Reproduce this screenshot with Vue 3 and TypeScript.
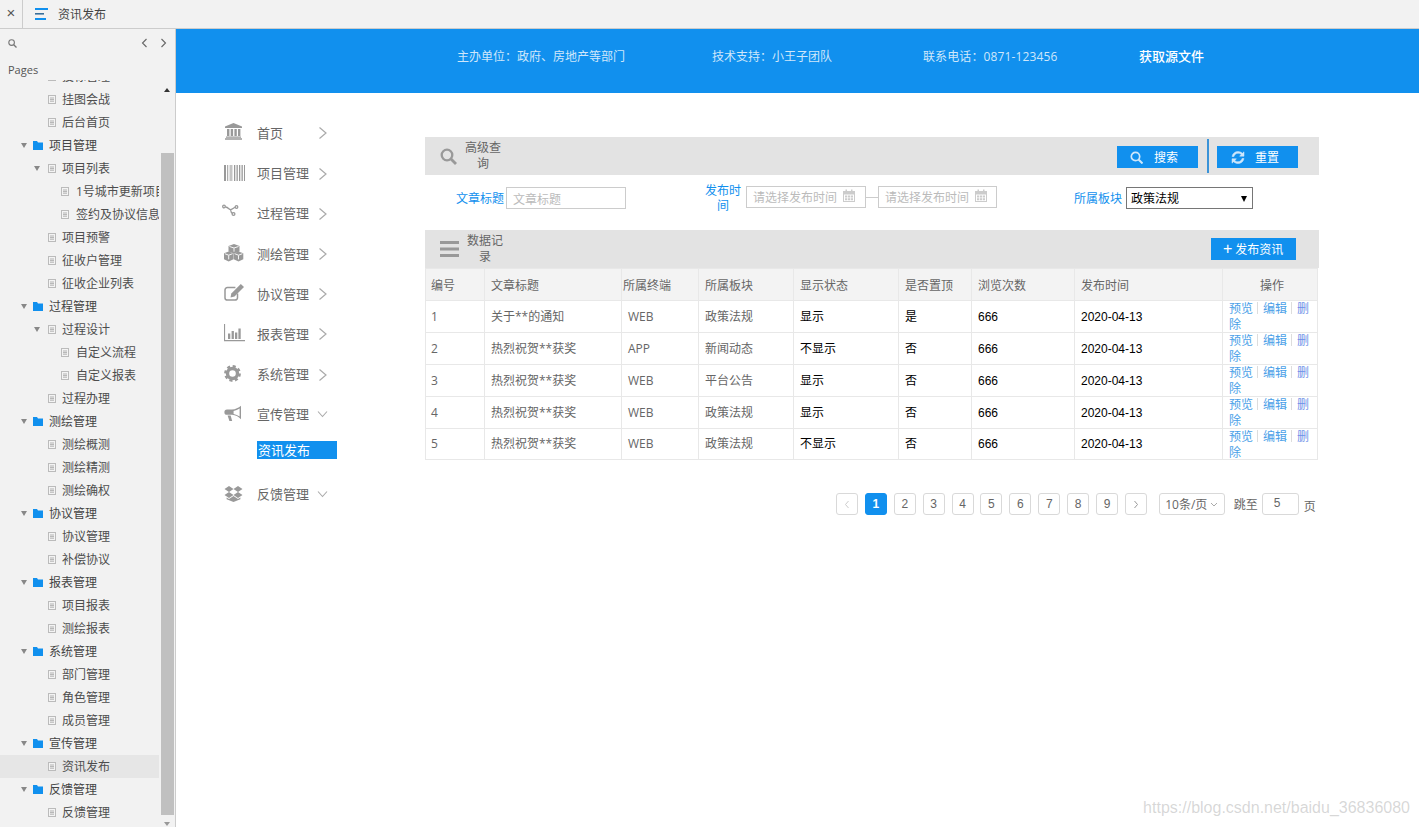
<script setup lang="ts">
type TreeRow = { level: 1 | 2 | 3; text: string; arrow?: boolean; selected?: boolean };
const tree: TreeRow[] = [
  { level: 2, text: '投标管理' }, { level: 2, text: '挂图会战' }, { level: 2, text: '后台首页' },
  { level: 1, text: '项目管理', arrow: true }, { level: 2, text: '项目列表', arrow: true },
  { level: 3, text: '1号城市更新项目' }, { level: 3, text: '签约及协议信息' },
  { level: 2, text: '项目预警' }, { level: 2, text: '征收户管理' }, { level: 2, text: '征收企业列表' },
  { level: 1, text: '过程管理', arrow: true }, { level: 2, text: '过程设计', arrow: true },
  { level: 3, text: '自定义流程' }, { level: 3, text: '自定义报表' }, { level: 2, text: '过程办理' },
  { level: 1, text: '测绘管理', arrow: true }, { level: 2, text: '测绘概测' }, { level: 2, text: '测绘精测' }, { level: 2, text: '测绘确权' },
  { level: 1, text: '协议管理', arrow: true }, { level: 2, text: '协议管理' }, { level: 2, text: '补偿协议' },
  { level: 1, text: '报表管理', arrow: true }, { level: 2, text: '项目报表' }, { level: 2, text: '测绘报表' },
  { level: 1, text: '系统管理', arrow: true }, { level: 2, text: '部门管理' }, { level: 2, text: '角色管理' }, { level: 2, text: '成员管理' },
  { level: 1, text: '宣传管理', arrow: true }, { level: 2, text: '资讯发布', selected: true },
  { level: 1, text: '反馈管理', arrow: true }, { level: 2, text: '反馈管理' },
];
const menus = [
  { icon: 'bank', text: '首页' }, { icon: 'barcode', text: '项目管理' }, { icon: 'flow', text: '过程管理' },
  { icon: 'cubes', text: '测绘管理' }, { icon: 'edit', text: '协议管理' }, { icon: 'chart', text: '报表管理' },
  { icon: 'gear', text: '系统管理' }, { icon: 'horn', text: '宣传管理', open: true, sub: '资讯发布' },
  { icon: 'box', text: '反馈管理', open: true },
];
const heads = ['编号', '文章标题', '所属终端', '所属板块', '显示状态', '是否置顶', '浏览次数', '发布时间', '操作'];
const colWidths = [59, 137, 77, 95, 105, 73, 103, 148, 95];
const rows = [
  ['1', '关于**的通知', 'WEB', '政策法规', '显示', '是'],
  ['2', '热烈祝贺**获奖', 'APP', '新闻动态', '不显示', '否'],
  ['3', '热烈祝贺**获奖', 'WEB', '平台公告', '显示', '否'],
  ['4', '热烈祝贺**获奖', 'WEB', '政策法规', '显示', '否'],
  ['5', '热烈祝贺**获奖', 'WEB', '政策法规', '不显示', '否'],
];
const pages = [1, 2, 3, 4, 5, 6, 7, 8, 9];
</script>

<template>
  <div class="page">
    <header class="topbar">
      <span class="close">×</span>
      <svg class="nav-ic" width="14" height="14" viewBox="0 0 14 14">
        <rect x="0" y="1" width="13" height="2" fill="#1190ee" />
        <rect x="0" y="6" width="9" height="1.6" fill="#3a6f9a" />
        <rect x="0" y="11" width="11" height="2" fill="#1190ee" />
      </svg>
      <span class="top-title">资讯发布</span>
    </header>
    <div class="body">
      <aside class="side">
        <div class="side-search">
          <svg width="9" height="9" viewBox="0 0 9 9"><circle cx="3.6" cy="3.6" r="2.8" fill="none" stroke="#777" stroke-width="1.1" /><path d="M5.7 5.7L8.5 8.5" stroke="#777" stroke-width="1.3" /></svg>
          <svg class="pager-l" width="7" height="10" viewBox="0 0 7 10"><path d="M5.5 1L1.5 5l4 4" fill="none" stroke="#666" stroke-width="1.1" /></svg>
          <svg class="pager-r" width="7" height="10" viewBox="0 0 7 10"><path d="M1.5 1l4 4-4 4" fill="none" stroke="#666" stroke-width="1.1" /></svg>
        </div>
        <div class="pages-title">Pages</div>
        <div class="tree">
          <div class="tree-inner">
            <div v-for="(r, i) in tree" :key="i" class="tree-row" :class="['lv' + r.level, { selected: r.selected }]">
              <span v-if="r.arrow" class="tri"></span>
              <svg v-if="r.level === 1" class="folder" width="10" height="9" viewBox="0 0 10 9"><path d="M0 0h4l1 1.5h5V9H0z" fill="#1190ee" /></svg>
              <svg v-else class="doc" width="8" height="9" viewBox="0 0 8 9"><rect x="0.5" y="0.5" width="7" height="8" fill="#f4f4f4" stroke="#bbb" /><path d="M2 3h4M2 4.6h4M2 6.2h4" stroke="#aaa" stroke-width="0.9" /></svg>
              <span class="tree-text">{{ r.text }}</span>
            </div>
          </div>
        </div>
        <div class="sb-thumb"></div>
        <span class="sb-up"></span>
        <span class="sb-down"></span>
      </aside>
      <main class="main">
        <div class="banner">
          <span class="b1">主办单位：政府、房地产等部门</span>
          <span class="b2">技术支持：小王子团队</span>
          <span class="b3">联系电话：0871-123456</span>
          <span class="b4">获取源文件</span>
        </div>
        <div class="work">
          <nav class="menu">
            <template v-for="m in menus" :key="m.text">
              <div class="menu-row">
                <svg class="m-ic" width="20" height="18" viewBox="0 0 20 18" fill="#999">
                  <template v-if="m.icon === 'bank'">
                    <path d="M9.5 0L18 3.6V5H1V3.6z" /><path d="M3 6h2.4v7H3zM6.7 6h2.4v7H6.7zM10.4 6h2.4v7h-2.4zM14 6h2.4v7H14z" /><path d="M2 13.6h15v1.2H2zM1 15.2h17v1.6H1z" />
                  </template>
                  <template v-else-if="m.icon === 'barcode'">
                    <path d="M0 1h2v16H0zM3.200 1h1v16h-1z" />
                    <path d="M5.500 1h3v16h-3z" fill="#c4c4c4" />
                    <path d="M10 1h1.300v16H10zM12.500 1h1.300v16h-1.300zM15 1h1.300v16H15zM17.500 1h1.300v16h-1.300zM20 1h1v16h-1z" />
                  </template>
                  <template v-else-if="m.icon === 'flow'">
                    <g fill="none" stroke="#999" stroke-width="1.3">
                      <circle cx="0" cy="2.500" r="1.300" /><circle cx="12.500" cy="3" r="1.300" /><circle cx="9.500" cy="10" r="1.400" />
                      <path d="M1.500 3c3 .3 3.500 2.700 5 2.700 1.700 0 3-1.500 4.500-2.500M6.500 5.700c.3 2 1 3.300 2 3.700" />
                    </g>
                  </template>
                  <template v-else-if="m.icon === 'cubes'">
                    <path d="M10 0l5.500 2v5.500L10 9.500 4.500 7.500V2z" /><path d="M4.700 7.500l4.800 1.800v6L4.700 17.500 0 15.300v-6z" /><path d="M14.500 7.500l4.800 1.800v6l-4.800 2.200-4.800-2.200v-6z" />
                    <path d="M5.500 2.500L10 4l4.500-1.500M.8 9.700l3.900 1.500 3.900-1.500M10.600 9.700l3.900 1.500 3.900-1.500M10 4.200v3.500M4.700 11.400v4M14.500 11.400v4" fill="none" stroke="#fff" stroke-width=".9" />
                  </template>
                  <template v-else-if="m.icon === 'edit'">
                    <path d="M13.500 9.500v4.200a2.400 2.400 0 0 1-2.400 2.400H3.400A2.400 2.400 0 0 1 1 13.700V6a2.400 2.400 0 0 1 2.400-2.400h8" fill="none" stroke="#999" stroke-width="1.500" />
                    <path d="M16.800 0l3.200 3L10.500 12.500l-4 .9.800-4z" />
                  </template>
                  <template v-else-if="m.icon === 'chart'">
                    <path d="M0 0h1.100v16H21v1.200H0z" /><path d="M4 9.500h2.300v5.500H4zM7.600 7h2.300v8H7.600zM11 8.500h2.300V15H11zM14.400 4.500h2.300V15h-2.300z" />
                  </template>
                  <template v-else-if="m.icon === 'gear'">
                    <circle cx="8.500" cy="8.500" r="5" fill="none" stroke="#999" stroke-width="3.400" />
                    <circle cx="8.500" cy="8.500" r="7.200" fill="none" stroke="#999" stroke-width="2.400" stroke-dasharray="3.050 2.600" />
                  </template>
                  <template v-else-if="m.icon === 'horn'">
                    <path d="M17 .8v13.400c-2.400-2.600-5.600-4.200-9-4.400H3A2.600 2.600 0 0 1 .4 7.200 2.600 2.600 0 0 1 3 4.600h5C11.400 4.300 14.600 3 17 .8zM15.600 3.600c-1.800 1.200-3.800 2-6 2.400v3c2.200.4 4.200 1.300 6 2.500z" />
                    <path d="M3.600 10.500h3l1.600 5.500H5.400z" />
                  </template>
                  <template v-else>
                    <path d="M5 1l4.500 3-4.500 3L.5 4zM14 1l4.500 3L14 7 9.500 4zM5 7l4.500 3L5 13 .5 10zM14 7l4.500 3L14 13l-4.500-3z" />
                    <path d="M9.500 11l4.500 3 2.400-1.500v1.800l-6.900 2.700-6.900-2.700v-1.800L5 14z" />
                  </template>
                </svg>
                <span class="m-label">{{ m.text }}</span>
                <svg v-if="!m.open" class="m-chev" width="10" height="14" viewBox="0 0 10 14"><path d="M1.500 1.500L8 7l-6.500 5.500" fill="none" stroke="#aaa" stroke-width="1.200" /></svg>
                <svg v-else class="m-chev open" width="11" height="10" viewBox="0 0 11 10"><path d="M1 2.500L5.500 7.500 10 2.500" fill="none" stroke="#aaa" stroke-width="1.100" /></svg>
              </div>
              <div v-if="m.sub" class="m-sub"><span class="m-sub-text">{{ m.sub }}</span></div>
            </template>
          </nav>
          <section class="content">
            <div class="bar">
              <svg class="bar-ic" width="17" height="17" viewBox="0 0 17 17"><circle cx="7" cy="7" r="5.300" fill="none" stroke="#999" stroke-width="2.300" /><path d="M11 11l5 5" stroke="#999" stroke-width="2.800" /></svg>
              <span class="bar-title t1">高级查询</span>
              <button class="btn b-search">
                <svg width="13" height="13" viewBox="0 0 13 13"><circle cx="5.500" cy="5.500" r="4.200" fill="none" stroke="#cfe7fb" stroke-width="1.700" /><path d="M8.500 8.500l4 4" stroke="#cfe7fb" stroke-width="2" /></svg>
                <span>搜索</span>
              </button>
              <span class="bar-sep"></span>
              <button class="btn b-reset">
                <svg width="14" height="13" viewBox="0 0 14 13" fill="#cfe7fb" stroke="#cfe7fb" stroke-width=".5"><path d="M1 5.500C1.500 2.500 4 .5 7 .5c1.800 0 3.300.7 4.400 1.800L13 .8v4.400H8.600l1.600-1.600C9.500 2.800 8.300 2.300 7 2.300 5 2.300 3.400 3.600 3 5.500zM13 7.500c-.5 3-3 5-6 5-1.800 0-3.300-.7-4.400-1.800L1 12.200V7.800h4.400L3.800 9.400c.7.800 1.900 1.300 3.200 1.300 2 0 3.600-1.300 4-3.200z" /></svg>
                <span>重置</span>
              </button>
            </div>
            <div class="filters">
              <label class="f-label l1">文章标题</label>
              <div class="text-box"><span class="ph">文章标题</span></div>
              <label class="f-label l2">发布时间</label>
              <div class="date-box">
                <span class="ph">请选择发布时间</span>
                <svg width="14" height="14" viewBox="0 0 14 14" fill="#ccc"><path d="M1 2h2.500V.5h1.500V2h4V.5h1.500V2H13v11H1zM2 5.500V12h10V5.500z" /><path d="M3 6.500h2.200v2H3zM5.900 6.500h2.200v2H5.900zM8.800 6.500h2.200v2H8.800zM3 9.300h2.200v2H3zM5.900 9.300h2.200v2H5.900zM8.800 9.300h2.200v2H8.800z" /></svg>
              </div>
              <span class="dash"></span>
              <div class="date-box">
                <span class="ph">请选择发布时间</span>
                <svg width="14" height="14" viewBox="0 0 14 14" fill="#ccc"><path d="M1 2h2.500V.5h1.500V2h4V.5h1.500V2H13v11H1zM2 5.500V12h10V5.500z" /><path d="M3 6.500h2.200v2H3zM5.900 6.500h2.200v2H5.900zM8.800 6.500h2.200v2H8.800zM3 9.300h2.200v2H3zM5.900 9.300h2.200v2H5.900zM8.800 9.300h2.200v2H8.800z" /></svg>
              </div>
              <label class="f-label l3">所属板块</label>
              <div class="sel-wrap">
                <select class="sel"><option>政策法规</option></select>
                <span class="sel-arrow"></span>
              </div>
            </div>
            <div class="bar">
              <svg class="bar-ic2" width="19" height="16" viewBox="0 0 19 16" fill="#999"><rect width="19" height="3" /><rect y="6.500" width="19" height="3" /><rect y="13" width="19" height="3" /></svg>
              <span class="bar-title t2">数据记录</span>
              <button class="btn b-add"><span class="plus">+</span><span>发布资讯</span></button>
            </div>
            <table class="grid">
              <colgroup><col v-for="(w, i) in colWidths" :key="i" :style="{ width: w + 'px' }" /></colgroup>
              <thead>
                <tr><th v-for="(h, i) in heads" :key="h" :class="{ tight: i === 2, center: i === 8 }">{{ h }}</th></tr>
              </thead>
              <tbody>
                <tr v-for="r in rows" :key="r[0]">
                  <td class="grey">{{ r[0] }}</td>
                  <td class="grey">{{ r[1] }}</td>
                  <td class="grey">{{ r[2] }}</td>
                  <td class="grey">{{ r[3] }}</td>
                  <td>{{ r[4] }}</td>
                  <td>{{ r[5] }}</td>
                  <td class="num">666</td>
                  <td class="num">2020-04-13</td>
                  <td class="ops"><div class="ops-in"><a class="op">预览</a><i class="sep"></i><a class="op">编辑</a><i class="sep"></i><a class="op del">删</a><a class="op del2">除</a></div></td>
                </tr>
              </tbody>
            </table>
            <div class="pager">
              <span class="pg arrow"><svg width="6" height="9" viewBox="0 0 6 9"><path d="M4.500 1L1.500 4.500l3 3.500" fill="none" stroke="#ccc" /></svg></span>
              <span v-for="p in pages" :key="p" class="pg" :class="{ on: p === 1 }">{{ p }}</span>
              <span class="pg arrow"><svg width="6" height="9" viewBox="0 0 6 9"><path d="M1.500 1l3 3.500-3 3.500" fill="none" stroke="#999" /></svg></span>
              <span class="size">10条/页<svg width="8" height="5" viewBox="0 0 8 5"><path d="M1 1l3 3 3-3" fill="none" stroke="#aaa" /></svg></span>
              <span class="jump">跳至</span>
              <span class="jump-box">5</span>
              <span class="unit">页</span>
            </div>
          </section>
        </div>
      </main>
    </div>
    <div class="mark">https://blog.csdn.net/baidu_36836080</div>
  </div>
</template>

<style>
html, body { margin: 0; background: #fff; overflow: hidden; }
</style>

<style scoped>
.page { position: relative; width: 1419px; height: 827px; overflow: hidden; font-family: "Open Sans", "Noto Sans CJK SC", sans-serif; font-size: 12px; color: #666; background: #fff; }
.topbar { height: 28px; display: flex; align-items: center; background: #f2f2f2; border-bottom: 1px solid #ccc; }
.close { width: 22px; height: 28px; box-sizing: content-box; border-right: 1px solid #ccc; text-align: center; line-height: 26px; font-size: 15px; color: #555; font-family: "Liberation Sans", sans-serif; }
.nav-ic { margin-left: 12px; }
.top-title { margin-left: 9px; color: #444; margin-top: -1px; }
.body { display: flex; height: 798px; }
.side { position: relative; width: 175px; flex: none; background: #f2f2f2; border-right: 1px solid #ccc; display: flex; flex-direction: column; overflow: hidden; }
.side-search { position: relative; height: 28px; padding-left: 8px; display: flex; align-items: center; }
.pager-l { position: absolute; left: 141px; top: 9px; }
.pager-r { position: absolute; left: 160px; top: 9px; }
.pages-title { height: 23px; padding-left: 8px; line-height: 26px; font-size: 11px; color: #555; }
.tree { flex: 1; overflow: hidden; }
.tree-inner { margin-top: -15px; width: 159px; }
.tree-row { position: relative; height: 23px; display: flex; align-items: center; white-space: nowrap; overflow: hidden; color: #4d4d4d; }
.tree-text { margin-top: -2px; }
.tree-row.selected { background: #e6e6e6; }
.lv1 { padding-left: 33px; color: #444; }
.lv2 { padding-left: 48px; }
.lv3 { padding-left: 61px; }
.folder { margin-right: 6px; flex: none; }
.doc { margin-right: 6px; flex: none; }
.lv3 .doc { margin-right: 7px; }
.tri { position: absolute; top: 9px; width: 0; height: 0; border-left: 3px solid transparent; border-right: 3px solid transparent; border-top: 5px solid #888; }
.lv1 .tri { left: 21px; }
.lv2 .tri { left: 34px; }
.sb-thumb { position: absolute; left: 161px; top: 124px; width: 13px; height: 662px; background: #c0c0c0; }
.sb-up { position: absolute; left: 164px; top: 59px; border-left: 3.500px solid transparent; border-right: 3.500px solid transparent; border-bottom: 4px solid #333; }
.sb-down { position: absolute; left: 164px; top: 793px; border-left: 3.500px solid transparent; border-right: 3.500px solid transparent; border-top: 4px solid #999; }
.main { flex: 1; min-width: 0; }
.banner { height: 64px; background: #1190ee; display: flex; color: #cfe7fb; line-height: 55px; }
.b1 { margin-left: 281px; width: 255px; }
.b2 { width: 211px; }
.b3 { width: 216px; letter-spacing: .12px; }
.b4 { color: #fff; font-size: 13px; line-height: 55px; font-weight: 500; }
.work { display: flex; }
.menu { width: 249px; flex: none; padding: 19.400px 0 0 48px; box-sizing: border-box; }
.menu-row { height: 40.200px; display: flex; align-items: center; position: relative; }
.m-ic { width: 20px; flex: none; overflow: visible; }
.m-label { margin-left: 13px; font-size: 13px; color: #666; }
.m-chev { position: absolute; left: 94px; top: 14px; }
.m-chev.open { left: 93px; top: 15px; }
.m-sub { height: 39.800px; padding-left: 33px; padding-top: 7.600px; box-sizing: border-box; }
.m-sub-text { display: block; width: 80px; height: 18px; line-height: 18px; background: #1190ee; color: #fff; font-size: 13px; padding-left: 1px; box-sizing: border-box; }
.content { width: 894px; flex: none; padding-top: 44px; }
.bar { position: relative; height: 38px; background: #e3e3e3; display: flex; align-items: center; }
.bar-ic { margin-left: 15px; }
.bar-ic2 { margin-left: 15px; }
.bar-title { width: 40px; text-align: center; line-height: 16px; color: #666; }
.t1 { margin-left: 6px; }
.t2 { margin-left: 6px; }
.btn { border: 0; padding: 0; height: 22px; background: #1190ee; color: #fff; display: flex; align-items: center; font: inherit; font-size: 12px; }
.b-search { width: 81px; margin: 2px 0 0 614px; padding-left: 13px; gap: 11px; }
.bar-sep { width: 2px; height: 34px; margin-left: 9px; background: #3a93d8; }
.b-reset { width: 81px; margin: 2px 0 0 8px; padding-left: 14px; gap: 10px; }
.b-add { width: 85px; margin-left: 706px; padding-left: 12px; gap: 3px; }
.plus { font-size: 16px; line-height: 18px; font-family: "Liberation Sans", sans-serif; }
.filters { height: 55px; display: flex; align-items: flex-start; }
.f-label { color: #1190ee; line-height: 15px; text-align: center; }
.l1 { margin-left: 31px; width: 48px; margin-top: 16px; }
.text-box { width: 120px; height: 22px; margin: 12px 0 0 2px; box-sizing: border-box; border: 1px solid #ccc; padding-left: 6px; line-height: 23px; }
.ph { color: #bbb; }
.l2 { width: 38px; margin-left: 78px; margin-top: 8px; }
.date-box { width: 120px; height: 22px; margin-top: 11px; box-sizing: border-box; border: 1px solid #ccc; padding-left: 6px; display: flex; align-items: center; line-height: 22px; gap: 5px; }
.l2 + .date-box { margin-left: 4px; }
.date-box .ph { margin-top: 2px; }
.date-box svg { margin-top: -2px; }
.dash { width: 12px; height: 1px; margin-top: 22px; background: #ccc; }
.dash + .date-box { width: 119px; }
.l3 { width: 48px; margin-left: 77px; margin-top: 16px; }
.sel-wrap { position: relative; width: 127px; height: 22px; margin: 12px 0 0 4px; }
.sel { display: block; width: 127px; height: 22px; box-sizing: border-box; -webkit-appearance: none; appearance: none; font-family: "Open Sans", "Noto Sans CJK SC", sans-serif; font-size: 12px; color: #000; background: #fff; border: 1px solid #767676; border-radius: 0; padding: 0 0 0 4px; }
.sel-arrow { position: absolute; left: 115px; top: 9px; border-left: 3.500px solid transparent; border-right: 3.500px solid transparent; border-top: 6px solid #000; }
.grid { table-layout: fixed; width: 893px; border-collapse: collapse; border: 1px solid #e8e8e8; }
.grid th { height: 32px; box-sizing: border-box; padding: 0 6px; background: #f3f3f3; border: 1px solid #e8e8e8; font-weight: 400; color: #666; text-align: left; }
.grid th:first-child, .grid td:first-child { padding-left: 5px; }
.grid th.tight { padding: 0 1px; }
.grid th.center { text-align: center; padding-left: 10px; padding-right: 6px; }
.grid td { height: 32px; box-sizing: border-box; padding: 0 6px; border: 1px solid #e8e8e8; color: #000; line-height: 16px; overflow: hidden; }
.grid tr:last-child td { height: 31px; }
.grid td.grey { color: #666; }
.grid td.num { font-family: "Liberation Sans", sans-serif; }
.grid td.ops { padding-left: 6px; padding-right: 0; }
.ops-in { height: 31px; word-break: break-all; }
.grid tr:last-child .ops-in { height: 30px; }
.op { color: #4a9fe8; }
.op.del { color: #6d8fe8; }
.op.del2 { color: #4a9fe8; }
.sep { display: inline-block; width: 1px; height: 12px; margin: 0 5px 0 4px; background: #ddd; vertical-align: -1px; }
.pager { display: flex; align-items: center; padding: 33px 0 0 411px; }
.pg { width: 22px; height: 22px; box-sizing: border-box; margin-right: 6.900px; border: 1px solid #d9d9d9; border-radius: 3px; display: flex; align-items: center; justify-content: center; color: #666; font-family: "Liberation Sans", sans-serif; font-size: 12px; }
.pg.on { background: #1190ee; border-color: #1190ee; color: #fff; font-weight: 700; }
.size { width: 66px; height: 22px; margin-left: 5px; box-sizing: border-box; border: 1px solid #d9d9d9; border-radius: 3px; display: flex; align-items: center; justify-content: center; gap: 3px; color: #666; }
.jump { margin-left: 9px; color: #666; }
.jump-box { width: 37px; height: 22px; margin-left: 4px; box-sizing: border-box; border: 1px solid #d9d9d9; border-radius: 3px; padding-left: 11px; line-height: 18px; color: #666; font-family: "Liberation Sans", sans-serif; }
.unit { margin-left: 5px; margin-top: 3px; color: #666; }
.mark { position: absolute; right: 9px; top: 799px; font-family: "Liberation Sans", sans-serif; font-size: 16px; color: rgba(150, 150, 150, .38); }
</style>
